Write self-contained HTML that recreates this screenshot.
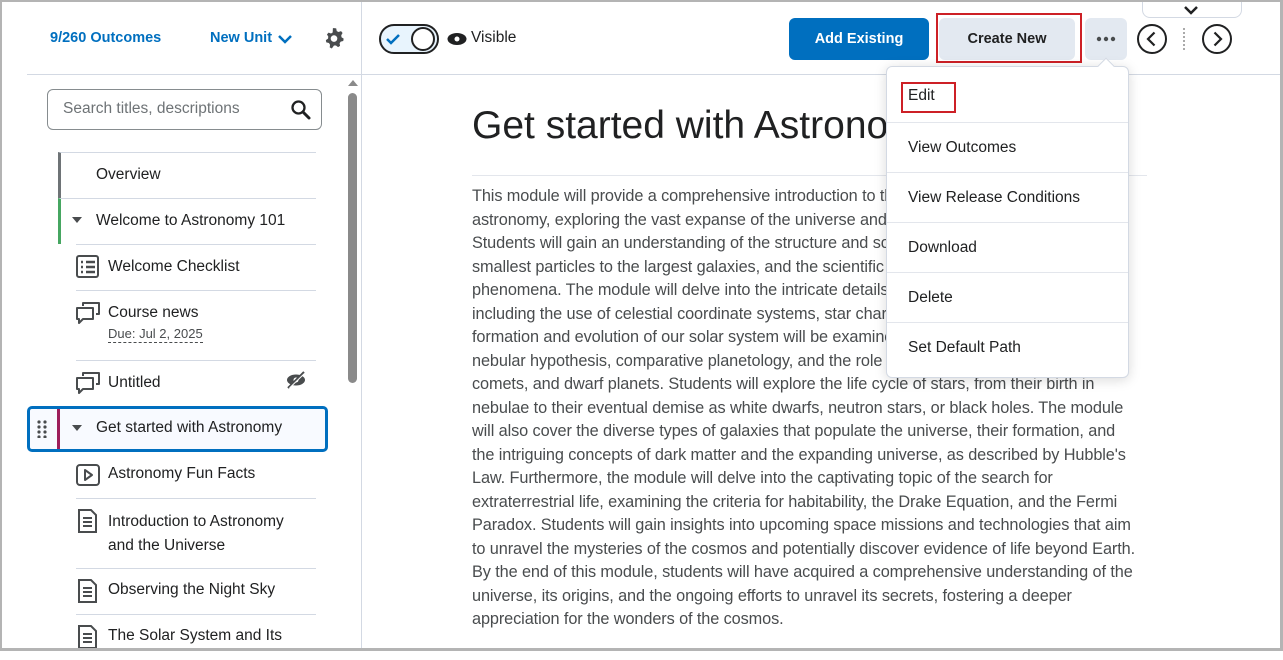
<!DOCTYPE html>
<html><head><meta charset="utf-8"><style>
*{box-sizing:border-box;margin:0;padding:0}
body{width:1283px;height:651px;overflow:hidden;background:#fff;font-family:"Liberation Sans",sans-serif;position:relative;color:#202122}
.frame{position:absolute;left:0;top:0;width:1283px;height:651px;border:2px solid #b4b4b4;border-right-width:3px;border-bottom-width:3px;pointer-events:none;z-index:50}
.abs{position:absolute}
.blue{color:#006fbf;font-weight:bold;font-size:14.5px}
.row{position:absolute;left:58px;width:258px;border-top:1px solid #d3d9e3;font-size:15.5px}
.sub{left:76px;width:240px}
.lines div{white-space:nowrap;height:23.5px;line-height:23.5px;font-size:16.3px;color:#494c4e;letter-spacing:-0.1px}
.menu div.it{height:50px;border-top:1px solid #e3e6ec;padding-left:21px;line-height:50px;font-size:15.5px}
</style></head><body>
<div class="frame"></div>
<div class="abs blue" style="left:50px;top:30px">9/260 Outcomes</div>
<div class="abs blue" style="left:210px;top:30px">New Unit</div>
<svg class="abs" style="left:277px;top:33px" width="16" height="12"><path d="M2 3l6 6 6-6" stroke="#006fbf" stroke-width="2.5" fill="none"/></svg>
<svg class="abs" style="left:323px;top:27px" width="22" height="22" viewBox="0 0 20 20"><path d="M10 1l2 .3.5 2.4 1.6.9 2.3-.8 1.4 1.7-1.2 2 .2 1.8 2 1.3-.4 2.1-2.3.6-1 1.5.4 2.4-1.8 1.1-1.9-1.5h-1.8L8 19.5l-1.9-1 .3-2.4-1-1.5-2.4-.6-.4-2.1 2-1.3.2-1.8-1.2-2L5 5.1l2.3.8 1.5-.9L9 1z" fill="#494c4e"/><circle cx="10" cy="10.5" r="3" fill="#fff"/></svg>
<div class="abs" style="left:361px;top:0;width:1px;height:651px;background:#d3d9e3"></div>
<div class="abs" style="left:27px;top:74px;width:1255px;height:1px;background:#d3d9e3"></div>
<div class="abs" style="left:348px;top:80px;width:0;height:0;border:5px solid transparent;border-bottom:6px solid #8a8a8a;border-top:0"></div>
<div class="abs" style="left:348px;top:93px;width:9px;height:290px;background:#8a8a8a;border-radius:5px"></div>
<div class="abs" style="left:47px;top:89px;width:275px;height:41px;border:1px solid #868c8f;border-radius:6px"></div>
<div class="abs" style="left:63px;top:100px;font-size:15.5px;color:#6e7376">Search titles, descriptions</div>
<svg class="abs" style="left:290px;top:99px" width="22" height="22"><circle cx="8.5" cy="8.5" r="6" stroke="#202122" stroke-width="2.3" fill="none"/><path d="M13 13l6 6" stroke="#202122" stroke-width="3" stroke-linecap="round"/></svg>
<div class="row" style="top:152px;height:46px;border-left:3px solid #6e7376;padding:13px 0 0 35px">Overview</div>
<div class="row" style="top:198px;height:46px;border-left:3px solid #46a661;padding:13px 0 0 35px">Welcome to Astronomy 101</div>
<div class="abs" style="left:72px;top:217px;border:5px solid transparent;border-top:6px solid #494c4e"></div>
<div class="row sub" style="top:244px;height:46px;padding:13px 0 0 32px">Welcome Checklist</div>
<svg class="abs" style="left:76px;top:255px" width="24" height="24"><rect x="1" y="1" width="21" height="21" rx="2" stroke="#494c4e" stroke-width="2" fill="none"/><path d="M5 7h2M10 7h9M5 12h2M10 12h9M5 17h2M10 17h9" stroke="#494c4e" stroke-width="2.4"/></svg>
<div class="row sub" style="top:290px;height:70px;padding:13px 0 0 32px">Course news<br><span style="font-size:13px;color:#494c4e;margin-top:4px;display:inline-block;border-bottom:1px dashed #494c4e;line-height:16px">Due: Jul 2, 2025</span></div>
<svg class="abs" style="left:75px;top:301px" width="26" height="24"><path d="M8 5V2h16v11h-3M2 7h16v11H8l-4 4v-4H2z" stroke="#494c4e" stroke-width="2" fill="none" stroke-linejoin="round"/></svg>
<div class="row sub" style="top:360px;height:46px;padding:13px 0 0 32px">Untitled</div>
<svg class="abs" style="left:75px;top:371px" width="26" height="24"><path d="M8 5V2h16v11h-3M2 7h16v11H8l-4 4v-4H2z" stroke="#494c4e" stroke-width="2" fill="none" stroke-linejoin="round"/></svg>
<svg class="abs" style="left:286px;top:371px" width="20" height="18"><ellipse cx="10" cy="9" rx="9" ry="5.5" fill="#494c4e"/><circle cx="10" cy="9" r="2.5" fill="#fff"/><path d="M2 17L18 1" stroke="#494c4e" stroke-width="2"/><path d="M3.5 17L18.5 2.5" stroke="#fff" stroke-width="1"/></svg>
<div class="abs" style="left:27px;top:406px;width:301px;height:46px;border:3px solid #006fbf;border-radius:5px;background:#f8faff"></div>
<div class="abs" style="left:57px;top:409px;width:3px;height:40px;background:#9d1d5a"></div>
<svg class="abs" style="left:37px;top:420px" width="10" height="18"><g fill="#494c4e"><circle cx="2" cy="2" r="1.6"/><circle cx="8" cy="2" r="1.6"/><circle cx="2" cy="7" r="1.6"/><circle cx="8" cy="7" r="1.6"/><circle cx="2" cy="12" r="1.6"/><circle cx="8" cy="12" r="1.6"/><circle cx="2" cy="17" r="1.6"/><circle cx="8" cy="17" r="1.6"/></g></svg>
<div class="abs" style="left:72px;top:425px;border:5px solid transparent;border-top:6px solid #494c4e"></div>
<div class="abs" style="left:96px;top:419px;font-size:15.5px">Get started with Astronomy</div>
<div class="row sub" style="top:452px;height:46px;border-top:0;padding:13px 0 0 32px">Astronomy Fun Facts</div>
<svg class="abs" style="left:76px;top:464px" width="24" height="22"><rect x="1" y="1" width="22" height="20" rx="3" stroke="#494c4e" stroke-width="2" fill="none"/><path d="M9 6v10l7-5z" stroke="#494c4e" stroke-width="2" fill="none" stroke-linejoin="round"/></svg>
<div class="row sub" style="top:498px;height:70px;padding:11px 0 0 32px;line-height:24px">Introduction to Astronomy<br>and the Universe</div>
<div class="row sub" style="top:568px;height:46px;padding:12px 0 0 32px">Observing the Night Sky</div>
<div class="row sub" style="top:614px;height:46px;padding:12px 0 0 32px">The Solar System and Its</div>
<svg class="abs" style="left:78px;top:509px" width="20" height="24"><path d="M1 1h12l5 5v17H1z" stroke="#494c4e" stroke-width="2" fill="none"/><path d="M5 9h9M5 13h9M5 17h9" stroke="#494c4e" stroke-width="2"/></svg>
<svg class="abs" style="left:78px;top:579px" width="20" height="24"><path d="M1 1h12l5 5v17H1z" stroke="#494c4e" stroke-width="2" fill="none"/><path d="M5 9h9M5 13h9M5 17h9" stroke="#494c4e" stroke-width="2"/></svg>
<svg class="abs" style="left:78px;top:625px" width="20" height="24"><path d="M1 1h12l5 5v17H1z" stroke="#494c4e" stroke-width="2" fill="none"/><path d="M5 9h9M5 13h9M5 17h9" stroke="#494c4e" stroke-width="2"/></svg>
<div class="abs" style="left:379px;top:24px;width:60px;height:30px;border:2px solid #202122;border-radius:15px;background:#e8f4fd"></div>
<svg class="abs" style="left:385px;top:31px" width="16" height="16"><path d="M2 8l4 4 8-8" stroke="#006fbf" stroke-width="2.5" fill="none"/></svg>
<div class="abs" style="left:411px;top:27px;width:24px;height:24px;border:2px solid #202122;border-radius:50%;background:#fff"></div>
<svg class="abs" style="left:447px;top:32px" width="20" height="14"><ellipse cx="10" cy="7" rx="9.5" ry="6" fill="#202122"/><circle cx="10" cy="7" r="2.5" fill="#fff"/></svg>
<div class="abs" style="left:471px;top:29px;font-size:15.5px">Visible</div>
<div class="abs" style="left:789px;top:18px;width:140px;height:42px;background:#006fbf;border-radius:6px;color:#fff;font-weight:bold;font-size:14.5px;text-align:center;line-height:42px">Add Existing</div>
<div class="abs" style="left:936px;top:13px;width:146px;height:50px;border:2px solid #cd2026"></div>
<div class="abs" style="left:939px;top:18px;width:136px;height:42px;background:#e3e9f1;border-radius:6px;font-weight:bold;font-size:14.5px;text-align:center;line-height:42px;color:#202122">Create New</div>
<div class="abs" style="left:1085px;top:18px;width:42px;height:42px;background:#e3e9f1;border-radius:6px"></div>
<svg class="abs" style="left:1096px;top:36px" width="22" height="6"><g fill="#494c4e"><circle cx="3" cy="3" r="2.2"/><circle cx="10" cy="3" r="2.2"/><circle cx="17" cy="3" r="2.2"/></g></svg>
<svg class="abs" style="left:1136px;top:23px" width="32" height="32"><circle cx="16" cy="16" r="14" stroke="#202122" stroke-width="2" fill="none"/><path d="M18.5 9.5L12 16l6.5 6.5" stroke="#202122" stroke-width="2.2" fill="none"/></svg>
<div class="abs" style="left:1183px;top:28px;width:0;height:22px;border-left:2px dotted #aaa"></div>
<svg class="abs" style="left:1201px;top:23px" width="32" height="32"><circle cx="16" cy="16" r="14" stroke="#202122" stroke-width="2" fill="none"/><path d="M13.5 9.5L20 16l-6.5 6.5" stroke="#202122" stroke-width="2.2" fill="none"/></svg>
<div class="abs" style="left:1142px;top:-5px;width:100px;height:23px;border:1px solid #d3d9e3;border-radius:0 0 8px 8px;background:#fff"></div>
<svg class="abs" style="left:1183px;top:5px" width="16" height="10"><path d="M2 2l6 6 6-6" stroke="#202122" stroke-width="2.5" fill="none"/></svg>
<div class="abs" style="left:472px;top:104px;font-size:39px;color:#202122;white-space:nowrap">Get started with Astronomy</div>
<div class="abs" style="left:472px;top:175px;width:675px;height:1px;background:#e3e6ec"></div>
<div class="abs lines" style="left:472px;top:185px;width:675px;overflow:hidden">
<div>This module will provide a comprehensive introduction to the fascinating field of</div>
<div>astronomy, exploring the vast expanse of the universe and our place within it.</div>
<div>Students will gain an understanding of the structure and scale of the cosmos, from the</div>
<div>smallest particles to the largest galaxies, and the scientific methods used to study these</div>
<div>phenomena. The module will delve into the intricate details of the night sky,</div>
<div>including the use of celestial coordinate systems, star charts, and telescopes. The</div>
<div>formation and evolution of our solar system will be examined in detail, including the</div>
<div>nebular hypothesis, comparative planetology, and the role of asteroids,</div>
<div>comets, and dwarf planets. Students will explore the life cycle of stars, from their birth in</div>
<div>nebulae to their eventual demise as white dwarfs, neutron stars, or black holes. The module</div>
<div>will also cover the diverse types of galaxies that populate the universe, their formation, and</div>
<div>the intriguing concepts of dark matter and the expanding universe, as described by Hubble's</div>
<div>Law. Furthermore, the module will delve into the captivating topic of the search for</div>
<div>extraterrestrial life, examining the criteria for habitability, the Drake Equation, and the Fermi</div>
<div>Paradox. Students will gain insights into upcoming space missions and technologies that aim</div>
<div>to unravel the mysteries of the cosmos and potentially discover evidence of life beyond Earth.</div>
<div>By the end of this module, students will have acquired a comprehensive understanding of the</div>
<div>universe, its origins, and the ongoing efforts to unravel its secrets, fostering a deeper</div>
<div>appreciation for the wonders of the cosmos.</div>
</div>
<div class="abs menu" style="left:886px;top:66px;width:243px;height:312px;background:#fff;border:1px solid #d3d9e3;border-radius:6px;box-shadow:0 2px 12px rgba(0,0,0,.15);z-index:10">
<div class="it" style="border-top:0;height:55px;line-height:58px">Edit</div>
<div class="it">View Outcomes</div>
<div class="it">View Release Conditions</div>
<div class="it">Download</div>
<div class="it">Delete</div>
<div class="it">Set Default Path</div>
</div>
<div class="abs" style="left:1100px;top:60px;width:12px;height:12px;background:#fff;border-left:1px solid #d3d9e3;border-top:1px solid #d3d9e3;transform:rotate(45deg);z-index:11"></div>
<div class="abs" style="left:901px;top:82px;width:55px;height:31px;border:2px solid #cd2026;z-index:12"></div>
</body></html>
